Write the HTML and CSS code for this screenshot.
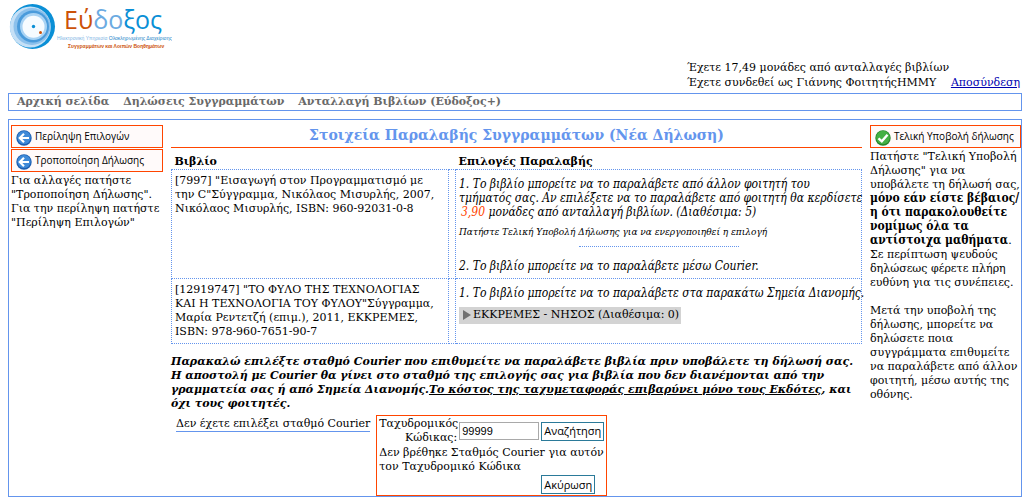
FILE: index.html
```
<!DOCTYPE html>
<html lang="el">
<head>
<meta charset="utf-8">
<title>Εύδοξος</title>
<link rel="stylesheet" href="styles.css">
</head>
<body>
<header class="header">
  <svg class="logo" width="164" height="50" viewBox="0 0 164 50" role="img" aria-label="Εύδοξος">
    <circle cx="24.500" cy="25.500" r="22.500" fill="#0a8fd6"/>
    <circle cx="22.300" cy="26" r="20.500" fill="#c5e0f6"/>
    <circle cx="24" cy="25.500" r="18.500" fill="#8cc1ec"/>
    <circle cx="25" cy="25.500" r="16" fill="#4a9bdb"/>
    <circle cx="25.500" cy="25.500" r="13.500" fill="#a9d3f4"/>
    <circle cx="25.500" cy="25.700" r="11" fill="#f6fbff"/>
    <circle cx="25.500" cy="25.500" r="1.700" fill="#0a8fd6"/>
    <circle cx="32.500" cy="31.500" r="1.500" fill="#cc5208"/>
    <text class="logo-name" x="56" y="28"><tspan fill="#cc5208">Εύ</tspan><tspan fill="#6cabe2">δο</tspan><tspan fill="#0a8fd6">ξος</tspan></text>
    <text class="logo-line" x="49" y="39"><tspan fill="#7db4e4">Ηλεκτρονική Υπηρεσία</tspan><tspan fill="#1a83c8"> Ολοκληρωμένης Διαχείρισης</tspan></text>
    <text class="logo-line logo-line-strong" x="60" y="47" fill="#cc5208">Συγγραμμάτων και Λοιπών Βοηθημάτων</text>
  </svg>
  <div class="account">
    <div>Έχετε 17,49 μονάδες από ανταλλαγές βιβλίων</div>
    <div class="account-row"><span>Έχετε συνδεθεί ως Γιάννης ΦοιτητήςΗΜΜΥ</span><a href="#">Αποσύνδεση</a></div>
  </div>
</header>
<nav class="menu">
  <a href="#">Αρχική σελίδα</a>
  <a href="#">Δηλώσεις Συγγραμμάτων</a>
  <a href="#">Ανταλλαγή Βιβλίων (Εύδοξος+)</a>
</nav>
<main class="main">
  <aside class="side">
    <button class="action" type="button">
      <svg class="icon" viewBox="0 0 16 16"><circle cx="8" cy="8" r="7.700" fill="#1c5eb0"/><circle cx="8" cy="7.500" r="6.600" fill="#3f8ad8"/><path d="M13 8H4M8 3.800L3.800 8L8 12.200" fill="none" stroke="#fff" stroke-width="2.200"/></svg>
      <span>Περίληψη Επιλογών</span>
    </button>
    <button class="action" type="button">
      <svg class="icon" viewBox="0 0 16 16"><circle cx="8" cy="8" r="7.700" fill="#1c5eb0"/><circle cx="8" cy="7.500" r="6.600" fill="#3f8ad8"/><path d="M13 8H4M8 3.800L3.800 8L8 12.200" fill="none" stroke="#fff" stroke-width="2.200"/></svg>
      <span>Τροποποίηση Δήλωσης</span>
    </button>
    <p class="hint">Για αλλαγές πατήστε<br>"Τροποποίηση Δήλωσης".<br>Για την περίληψη πατήστε<br>"Περίληψη Επιλογών"</p>
  </aside>
  <section class="center">
    <h1 class="title">Στοιχεία Παραλαβής Συγγραμμάτων (Νέα Δήλωση)</h1>
    <table class="books">
      <colgroup><col class="col-book"><col class="col-gap"><col></colgroup>
      <thead>
        <tr><th colspan="2">Βιβλίο</th><th>Επιλογές Παραλαβής</th></tr>
      </thead>
      <tbody>
        <tr>
          <td>[7997] "Εισαγωγή στον Προγραμματισμό με<br>την C"Σύγγραμμα, Νικόλαος Μισυρλής, 2007,<br>Νικόλαος Μισυρλής, ISBN: 960-92031-0-8</td>
          <td></td>
          <td class="options">
            <p>1. Το βιβλίο μπορείτε να το παραλάβετε από άλλον φοιτητή του<br>τμήματός σας. Αν επιλέξετε να το παραλάβετε από φοιτητή θα κερδίσετε<br><span class="units">3,90</span> μονάδες από ανταλλαγή βιβλίων. (Διαθέσιμα: 5)</p>
            <p class="note">Πατήστε Τελική Υποβολή Δήλωσης για να ενεργοποιηθεί η επιλογή</p>
            <hr class="divider">
            <p>2. Το βιβλίο μπορείτε να το παραλάβετε μέσω Courier.</p>
          </td>
        </tr>
        <tr>
          <td>[12919747] "ΤΟ ΦΥΛΟ ΤΗΣ ΤΕΧΝΟΛΟΓΙΑΣ<br>ΚΑΙ Η ΤΕΧΝΟΛΟΓΙΑ ΤΟΥ ΦΥΛΟΥ"Σύγγραμμα,<br>Μαρία Ρεντετζή (επιμ.), 2011, ΕΚΚΡΕΜΕΣ,<br>ISBN: 978-960-7651-90-7</td>
          <td></td>
          <td class="options">
            <p>1. Το βιβλίο μπορείτε να το παραλάβετε στα παρακάτω Σημεία Διανομής.</p>
            <button class="point" type="button"><svg class="arrow" viewBox="0 0 8 10"><path d="M0 0L8 5L0 10Z" fill="#707070"/></svg>ΕΚΚΡΕΜΕΣ - ΝΗΣΟΣ (Διαθέσιμα: 0)</button>
          </td>
        </tr>
      </tbody>
    </table>
    <p class="notice">Παρακαλώ επιλέξτε σταθμό Courier που επιθυμείτε να παραλάβετε βιβλία πριν υποβάλετε τη δήλωσή σας.<br>Η αποστολή με Courier θα γίνει στο σταθμό της επιλογής σας για βιβλία που δεν διανέμονται από την<br>γραμματεία σας ή από Σημεία Διανομής.<u>Το κόστος της ταχυμεταφοράς επιβαρύνει μόνο τους Εκδότες</u>, και<br>όχι τους φοιτητές.</p>
    <div class="courier">
      <span class="courier-state">Δεν έχετε επιλέξει σταθμό Courier</span>
      <form class="search">
        <label class="search-label" for="zip">Ταχυδρομικός<br>Κώδικας:</label>
        <input class="search-input" id="zip" type="text" value="99999">
        <button class="small-button" type="button">Αναζήτηση</button>
        <p class="search-message">Δεν βρέθηκε Σταθμός Courier για αυτόν<br>τον Ταχυδρομικό Κώδικα</p>
        <button class="small-button cancel" type="button">Ακύρωση</button>
      </form>
    </div>
  </section>
  <aside class="side side-right">
    <button class="action" type="button">
      <svg class="icon" viewBox="0 0 16 16"><circle cx="8" cy="8" r="7.700" fill="#25852a"/><circle cx="8" cy="7.500" r="6.800" fill="#44b044"/><path d="M3.500 8.300L6.800 11.300L12.500 4.800" fill="none" stroke="#fff" stroke-width="2.400"/></svg>
      <span>Τελική Υποβολή δήλωσης</span>
    </button>
    <p class="hint">Πατήστε "Τελική Υποβολή<br>Δήλωσης" για να<br>υποβάλετε τη δήλωσή σας,<br><b>μόνο εάν είστε βέβαιος/<br>η ότι παρακολουθείτε<br>νομίμως όλα τα<br>αντίστοιχα μαθήματα</b>.<br>Σε περίπτωση ψευδούς<br>δηλώσεως φέρετε πλήρη<br>ευθύνη για τις συνέπειες.</p>
    <p class="hint hint-next">Μετά την υποβολή της<br>δήλωσης, μπορείτε να<br>δηλώσετε ποια<br>συγγράμματα επιθυμείτε<br>να παραλάβετε από άλλον<br>φοιτητή, μέσω αυτής της<br>οθόνης.</p>
  </aside>
</main>
</body>
</html>
```
FILE: styles.css
```
* { box-sizing: border-box; }
body {
  margin: 0 8px;
  background: #fff;
  color: #000;
  font: 11px/14px "DejaVu Serif", serif;
  white-space: nowrap;
}
p { margin: 0; }
button, input { font-family: "Open Sans", sans-serif; color: #000; margin: 0; }
.header { display: flex; flex-direction: column; }
.logo { display: block; margin-top: 1px; }
.logo-name { font: 500 25px "Open Sans", sans-serif; }
.logo-line { font: 5px "Liberation Sans", sans-serif; }
.logo-line-strong { font-weight: bold; }
.account { align-self: flex-end; width: 335px; margin-top: 9px; line-height: 15px; }
.account-row { display: flex; justify-content: space-between; padding-right: 2px; }
.account a { color: #0000b0; }
.menu {
  display: flex;
  gap: 14px;
  margin-top: 3px;
  padding: 1px 8px;
  border: 1px solid #6495ed;
  font-weight: bold;
}
.menu a { color: #696969; text-decoration: none; }
.main {
  display: flex;
  gap: 8px;
  margin-top: 8px;
  padding: 5px 0 0 2px;
  border: 1px solid #6495ed;
}
.side { flex: 0 0 152px; }
.side-right { flex-basis: 151px; }
.side b { font-family: "DejaVu Serif Condensed", "DejaVu Serif", serif; font-size: 12px; line-height: 1; }
.action {
  display: flex;
  align-items: center;
  gap: 3px;
  width: 100%;
  height: 23px;
  margin-bottom: 1px;
  padding: 0 4px;
  border: 1px solid #ff4500;
  background: #fffafa;
  font-size: 10px;
  line-height: 14px;
}
.action span { padding-bottom: 2px; }
.icon { width: 16px; height: 16px; flex: none; margin-top: 2px; }
.hint { padding-top: 1px; }
.hint-next { margin-top: 13px; }
.center { flex: 1; min-width: 0; }
.title {
  margin: 0 0 7px;
  padding-bottom: 2px;
  border-bottom: 1px solid #ff4500;
  color: #6495ed;
  font-size: 14px;
  line-height: 20px;
  text-align: center;
}
.books { width: 100%; border-collapse: collapse; table-layout: fixed; }
.col-book { width: 277px; }
.col-gap { width: 7px; }
.books th { padding: 0 3px; text-align: left; }
.books td { padding: 4px 3px; border: 1px dotted #6495ed; vertical-align: top; }
.books .options { padding: 7px 3px 5px; }
.options p { font-family: "DejaVu Serif Condensed", "DejaVu Serif", serif; font-size: 12px; font-style: italic; }
.units { color: #ff4500; padding-left: 2px; }
.options .note { margin-top: 6px; font-size: 10px; }
.divider {
  width: 160px;
  margin: 7px auto 12px;
  border: 0;
  border-top: 1px dotted #6495ed;
}
.point {
  display: flex;
  align-items: center;
  gap: 2px;
  margin: 7px 0 6px;
  padding: 1px 2px 2px 4px;
  border: 0;
  background: #d3d3d3;
  font: 11px/14px "DejaVu Serif", serif;
}
.arrow { width: 8px; height: 10px; }
.notice { margin-top: 11px; font-weight: bold; font-style: italic; }
.courier { display: flex; align-items: flex-start; gap: 6px; margin-top: 4px; padding-left: 5px; }
.courier-state { margin-top: 2px; border-bottom: 1px solid #6495ed; }
.search {
  display: grid;
  grid-template-columns: 78px 80px auto;
  align-items: center;
  column-gap: 2px;
  padding: 1px 2px;
  border: 1px solid #ff4500;
}
.search-label { text-align: right; }
.search-input {
  width: 100%;
  height: 18px;
  padding: 0 2px;
  border: 1px solid #a9a9a9;
  font: 11px/14px "Liberation Sans", sans-serif;
}
.small-button {
  height: 19px;
  padding: 0 2px;
  border: 1px solid #2b7a99;
  background: #fff;
  font-size: 11px;
  line-height: 14px;
}
.search-message { grid-column: 1 / -1; margin: 1px 0; }
.cancel { grid-column: 3; justify-self: start; }
```
